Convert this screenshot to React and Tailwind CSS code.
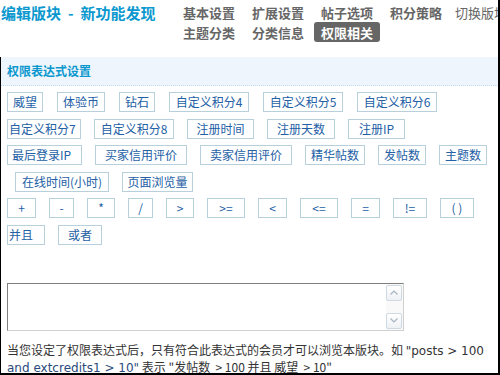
import React from "react";

const CJK = "font-['Noto_Sans_CJK_SC','Noto_Sans',sans-serif]";

function Btn({ w, children, cls = "" }) {
  return (
    <div
      className={`h-[20px] shrink-0 border border-[#b7d0db] bg-white flex items-center justify-center text-[12px] leading-none text-[#2360a5] ${w} ${cls}`}
    >
      {children}
    </div>
  );
}

function NavItem({ children, active }) {
  return (
    <div
      className={`h-[20px] px-[7px] flex items-center text-[13px] font-bold leading-none rounded-[3px] ${
        active ? "bg-[#666666] text-white" : "text-[#666666]"
      }`}
    >
      {children}
    </div>
  );
}

export default function App() {
  return (
    <div
      className={`w-[500px] h-[375px] overflow-hidden bg-white border-r-2 border-b-2 border-black ${CJK}`}
    >
      {/* header */}
      <div className="h-[57px] flex">
        <div className="w-[176px] shrink-0 pt-[2px] pl-[1px]">
          <div className="h-[20px] flex items-center text-[15px] font-bold text-[#0a98cf] leading-none whitespace-nowrap">
            <span>编辑版块</span>
            <span className="mx-[7px]">-</span>
            <span>新功能发现</span>
          </div>
        </div>
        <div className="pt-[2px] flex flex-col">
          <div className="flex gap-[3px] whitespace-nowrap">
            <NavItem>基本设置</NavItem>
            <NavItem>扩展设置</NavItem>
            <NavItem>帖子选项</NavItem>
            <NavItem>积分策略</NavItem>
            <div className="h-[20px] pl-[3px] flex items-center text-[13px] leading-none text-[#666666]">
              切换版块
            </div>
          </div>
          <div className="flex gap-[3px] whitespace-nowrap">
            <NavItem>主题分类</NavItem>
            <NavItem>分类信息</NavItem>
            <NavItem active>权限相关</NavItem>
          </div>
        </div>
      </div>

      <div className="border-l border-black h-[318px]">
        {/* section band */}
        <div className="h-[29px] bg-[#eef5fc] flex items-center px-[6px] text-[12px] font-bold text-[#0a98cf] border-b border-dotted border-[#c6dcee]">
          权限表达式设置
        </div>

        {/* buttons */}
        <div className="pl-[6px] pt-[6px] flex flex-col gap-[6.6px]">
          <div className="flex gap-[14px]">
            <Btn w="w-[36px]">威望</Btn>
            <Btn w="w-[48px]">体验币</Btn>
            <Btn w="w-[36px]">钻石</Btn>
            <Btn w="w-[80px]">自定义积分4</Btn>
            <Btn w="w-[80px]">自定义积分5</Btn>
            <Btn w="w-[80px]">自定义积分6</Btn>
          </div>
          <div className="flex gap-[13px]">
            <Btn w="w-[74px]" cls="!justify-start pl-[1px]">自定义积分7</Btn>
            <Btn w="w-[80px]">自定义积分8</Btn>
            <Btn w="w-[67px]">注册时间</Btn>
            <Btn w="w-[68px]">注册天数</Btn>
            <Btn w="w-[57px]">注册IP</Btn>
          </div>
          <div className="flex gap-[13px]">
            <Btn w="w-[75px]" cls="!justify-start pl-[4px]">最后登录IP</Btn>
            <Btn w="w-[92px]">买家信用评价</Btn>
            <Btn w="w-[92px]">卖家信用评价</Btn>
            <Btn w="w-[60px]">精华帖数</Btn>
            <Btn w="w-[48px]">发帖数</Btn>
            <Btn w="w-[48px]">主题数</Btn>
          </div>
          <div className="flex gap-[13px] pl-[8px]">
            <Btn w="w-[94px]">在线时间(小时)</Btn>
            <Btn w="w-[71px]">页面浏览量</Btn>
          </div>
          <div className="flex gap-[13px]">
            <Btn w="w-[29px]">+</Btn>
            <Btn w="w-[25px]">-</Btn>
            <Btn w="w-[28px]">*</Btn>
            <Btn w="w-[25px]">/</Btn>
            <Btn w="w-[28px]">&gt;</Btn>
            <Btn w="w-[38px]">&gt;=</Btn>
            <Btn w="w-[29px]">&lt;</Btn>
            <Btn w="w-[38px]">&lt;=</Btn>
            <Btn w="w-[29px]">=</Btn>
            <Btn w="w-[34px]">!=</Btn>
            <Btn w="w-[34px]">( )</Btn>
          </div>
          <div className="flex gap-[13px]">
            <Btn w="w-[38px]" cls="!justify-start pl-[1px]">并且</Btn>
            <Btn w="w-[44px]">或者</Btn>
          </div>
        </div>

        {/* textarea */}
        <div className="ml-[6px] mt-[38px] w-[397px] h-[48px] border-t border-l border-[#7f7f7f] border-r border-b border-r-[#d0d0d0] border-b-[#d0d0d0] bg-white flex justify-end">
          <div className="w-[17px] h-full bg-[#f9f9f9] flex flex-col justify-between py-[1px] pr-[1px]">
            <div className="h-[16px] rounded-[2px] border border-[#cfd9e2] bg-gradient-to-b from-white to-[#eef1f5] flex items-center justify-center">
              <svg width="8" height="5" viewBox="0 0 8 5">
                <path d="M0.5 4.5 L4 1 L7.5 4.5" fill="none" stroke="#a8b4c0" strokeWidth="1.2" />
              </svg>
            </div>
            <div className="h-[16px] rounded-[2px] border border-[#cfd9e2] bg-gradient-to-b from-white to-[#eef1f5] flex items-center justify-center">
              <svg width="8" height="5" viewBox="0 0 8 5">
                <path d="M0.5 0.5 L4 4 L7.5 0.5" fill="none" stroke="#a8b4c0" strokeWidth="1.2" />
              </svg>
            </div>
          </div>
        </div>

        {/* note */}
        <div className="mt-[11px] pl-[6px] text-[12px] leading-[15px] text-[#333333] whitespace-nowrap">
          <div>
            当您设定了权限表达式后，只有符合此表达式的会员才可以浏览本版块。如{" "}
            <span className="font-['DejaVu_Sans',sans-serif] text-[12px]">"posts &gt; 100</span>
          </div>
          <div>
            <span className="font-['DejaVu_Sans',sans-serif] text-[12px] text-[#2b4a7a]">and extcredits1 &gt; 10"</span>{" "}
            表示 "发帖数 &nbsp;&gt; 100 并且 威望 &nbsp;&gt; 10"
          </div>
        </div>
      </div>
    </div>
  );
}
